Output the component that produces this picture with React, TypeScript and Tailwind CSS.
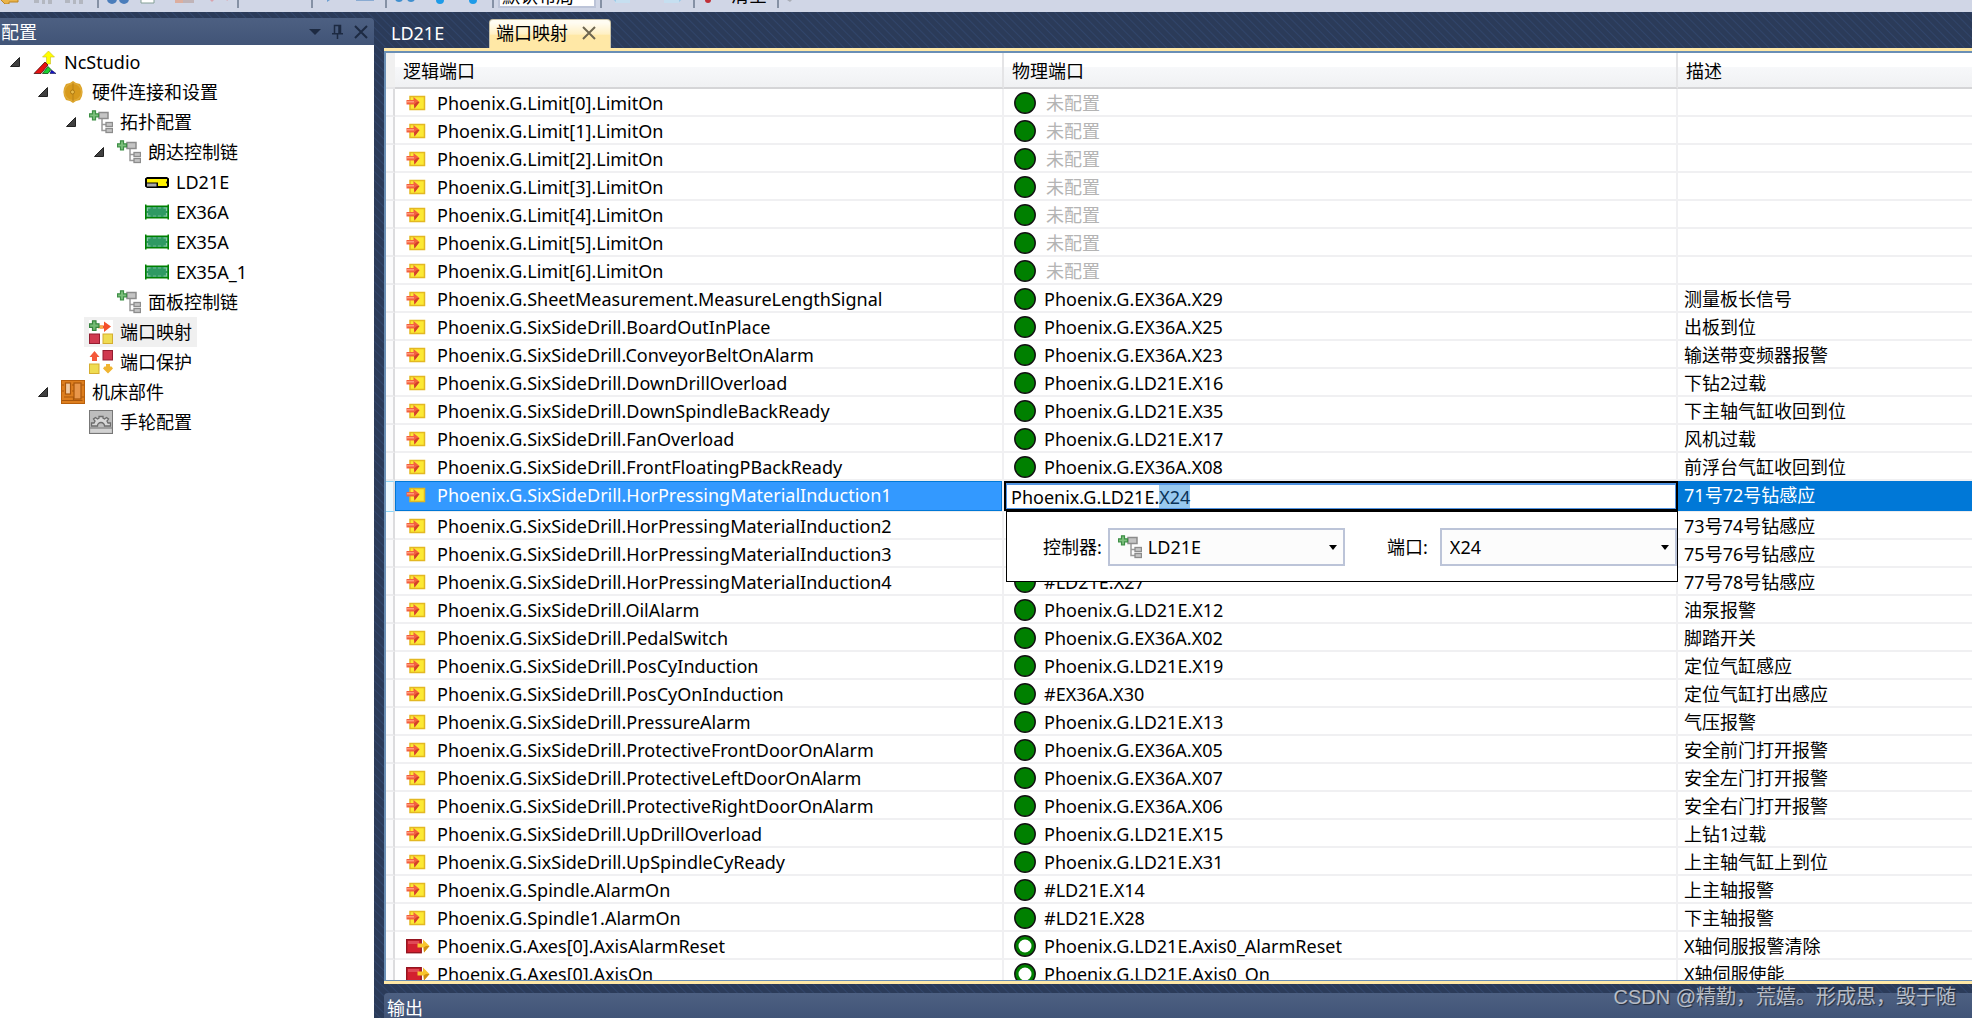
import { useEffect, useRef, useState } from "react";
import type { ReactNode } from "react";
import clsx from "clsx";

type PortRow = {
  name: string;
  port?: string;
  desc?: string;
  output?: boolean;
};

const rows: PortRow[] = [
  { name: "Phoenix.G.Limit[0].LimitOn" },
  { name: "Phoenix.G.Limit[1].LimitOn" },
  { name: "Phoenix.G.Limit[2].LimitOn" },
  { name: "Phoenix.G.Limit[3].LimitOn" },
  { name: "Phoenix.G.Limit[4].LimitOn" },
  { name: "Phoenix.G.Limit[5].LimitOn" },
  { name: "Phoenix.G.Limit[6].LimitOn" },
  { name: "Phoenix.G.SheetMeasurement.MeasureLengthSignal", port: "Phoenix.G.EX36A.X29", desc: "测量板长信号" },
  { name: "Phoenix.G.SixSideDrill.BoardOutInPlace", port: "Phoenix.G.EX36A.X25", desc: "出板到位" },
  { name: "Phoenix.G.SixSideDrill.ConveyorBeltOnAlarm", port: "Phoenix.G.EX36A.X23", desc: "输送带变频器报警" },
  { name: "Phoenix.G.SixSideDrill.DownDrillOverload", port: "Phoenix.G.LD21E.X16", desc: "下钻2过载" },
  { name: "Phoenix.G.SixSideDrill.DownSpindleBackReady", port: "Phoenix.G.LD21E.X35", desc: "下主轴气缸收回到位" },
  { name: "Phoenix.G.SixSideDrill.FanOverload", port: "Phoenix.G.LD21E.X17", desc: "风机过载" },
  { name: "Phoenix.G.SixSideDrill.FrontFloatingPBackReady", port: "Phoenix.G.EX36A.X08", desc: "前浮台气缸收回到位" },
  { name: "Phoenix.G.SixSideDrill.HorPressingMaterialInduction1", port: "Phoenix.G.LD21E.X24", desc: "71号72号钻感应" },
  { name: "Phoenix.G.SixSideDrill.HorPressingMaterialInduction2", port: "", desc: "73号74号钻感应" },
  { name: "Phoenix.G.SixSideDrill.HorPressingMaterialInduction3", port: "", desc: "75号76号钻感应" },
  { name: "Phoenix.G.SixSideDrill.HorPressingMaterialInduction4", port: "#LD21E.X27", desc: "77号78号钻感应" },
  { name: "Phoenix.G.SixSideDrill.OilAlarm", port: "Phoenix.G.LD21E.X12", desc: "油泵报警" },
  { name: "Phoenix.G.SixSideDrill.PedalSwitch", port: "Phoenix.G.EX36A.X02", desc: "脚踏开关" },
  { name: "Phoenix.G.SixSideDrill.PosCyInduction", port: "Phoenix.G.LD21E.X19", desc: "定位气缸感应" },
  { name: "Phoenix.G.SixSideDrill.PosCyOnInduction", port: "#EX36A.X30", desc: "定位气缸打出感应" },
  { name: "Phoenix.G.SixSideDrill.PressureAlarm", port: "Phoenix.G.LD21E.X13", desc: "气压报警" },
  { name: "Phoenix.G.SixSideDrill.ProtectiveFrontDoorOnAlarm", port: "Phoenix.G.EX36A.X05", desc: "安全前门打开报警" },
  { name: "Phoenix.G.SixSideDrill.ProtectiveLeftDoorOnAlarm", port: "Phoenix.G.EX36A.X07", desc: "安全左门打开报警" },
  { name: "Phoenix.G.SixSideDrill.ProtectiveRightDoorOnAlarm", port: "Phoenix.G.EX36A.X06", desc: "安全右门打开报警" },
  { name: "Phoenix.G.SixSideDrill.UpDrillOverload", port: "Phoenix.G.LD21E.X15", desc: "上钻1过载" },
  { name: "Phoenix.G.SixSideDrill.UpSpindleCyReady", port: "Phoenix.G.LD21E.X31", desc: "上主轴气缸上到位" },
  { name: "Phoenix.G.Spindle.AlarmOn", port: "#LD21E.X14", desc: "上主轴报警" },
  { name: "Phoenix.G.Spindle1.AlarmOn", port: "#LD21E.X28", desc: "下主轴报警" },
  { name: "Phoenix.G.Axes[0].AxisAlarmReset", port: "Phoenix.G.LD21E.Axis0_AlarmReset", desc: "X轴伺服报警清除", output: true },
  { name: "Phoenix.G.Axes[0].AxisOn", port: "Phoenix.G.LD21E.Axis0_On", desc: "X轴伺服使能", output: true },
];

/* ---------- icons ---------- */

function Icon({ children }: { children: ReactNode }) {
  return (
    <svg viewBox="0 0 24 24" className="size-6 shrink-0" aria-hidden="true">
      {children}
    </svg>
  );
}

function NcIcon() {
  return (
    <Icon>
      <path d="M15.500 1 21.500 7H17.500v7h-4V7H9.500z" fill="#ffff00" stroke="#c8ba20" strokeWidth=".6" />
      <path d="M1 23.500 12 12l3 3-7 8.500z" fill="#e81010" stroke="#300" strokeWidth=".7" />
      <path d="m9.500 23.500 5.500-7 3 3-3 4z" fill="#18d030" stroke="#030" strokeWidth=".7" />
      <path d="m17 23.500 1.500-3.500 4.500 3.500z" fill="#1414c8" stroke="#003" strokeWidth=".5" />
    </Icon>
  );
}

function HardwareIcon() {
  return (
    <Icon>
      <path d="m12 1 3 2 4 1 2 4 .6 4-.6 4-2 4-4 1-3 2-3-2-4-1-2-4-.6-4L3 8l2-4 4-1z" fill="#dca326" />
      <circle cx="12" cy="12" r="8.500" fill="#d79a1c" stroke="#e3b248" strokeWidth=".8" />
      <path d="M12 3v7M12 14v7" stroke="#b98218" />
      <circle cx="11.500" cy="12" r="2" fill="#e8bb4a" stroke="#a87410" strokeWidth=".9" />
    </Icon>
  );
}

function TopologyIcon() {
  return (
    <Icon>
      <path d="M13 8.500V20.500h4M13 14.500h4" fill="none" stroke="#9a9a9a" strokeWidth="1.500" />
      <rect x="10" y="2.500" width="9" height="6" fill="#c4c4c4" stroke="#8c8c8c" strokeWidth="1.500" />
      <rect x="17" y="12.500" width="6.500" height="4" fill="#c4c4c4" stroke="#8c8c8c" strokeWidth="1.300" />
      <rect x="17" y="18.500" width="6.500" height="4" fill="#c4c4c4" stroke="#8c8c8c" strokeWidth="1.300" />
      <path d="M3.500.800h3v3h3v3h-3v3h-3v-3h-3v-3h3z" fill="#7cc07c" stroke="#3d8f45" strokeWidth="1.200" />
    </Icon>
  );
}

function ControllerIcon() {
  return (
    <Icon>
      <path d="M2 7h20l2 1.500v8L22 18H2L0 16.500v-8z" fill="#000" />
      <path d="M2 9h20v2l-1 1.500 1 1.500v2H13v-3.500H2z" fill="#fff200" />
      <path d="M2 13.500h9.500v3H2z" fill="#a8a8a8" />
    </Icon>
  );
}

function BoardIcon() {
  return (
    <Icon>
      <path d="M0 4.500h1.500v1h21v-1H24v15h-1.500v-1h-21v1H0z" fill="#008000" />
      <rect x="1.500" y="7" width="21" height="10" fill="#2e9a62" />
      <path d="M2.500 11v-3h3M18.500 8h3v3M2.500 13v3h3M18.500 16h3v-3" fill="none" stroke="#8cc9a6" strokeWidth="1.200" />
      <path d="M8 8h3M13 8h3M8 16h3M13 16h3" stroke="#6fb890" />
    </Icon>
  );
}

function MappingIcon() {
  return (
    <Icon>
      <rect width="24" height="24" fill="#fff" />
      <path d="M11 5.500h4v-4l7 5-7 5.500V8.500h-4z" fill="#f4502c" />
      <path d="M9 5.500h5v3H9z" fill="#f3b04a" />
      <path d="M3.500.800h3.500v3h3v3.500H7v3H3.500v-3h-3V3.800h3z" fill="#73bb73" stroke="#36853e" strokeWidth="1.200" />
      <rect x=".5" y="14" width="10" height="9.500" fill="#d03a50" stroke="#941d30" />
      <rect x="14" y="14" width="9.500" height="9.500" fill="#efdc52" stroke="#d5ae30" />
    </Icon>
  );
}

function ProtectIcon() {
  return (
    <Icon>
      <path d="m5.500 1 5 6H8v4H3V7H.500z" fill="#f4583a" />
      <rect x="14" y=".5" width="9.500" height="9.500" fill="#d03a50" stroke="#941d30" />
      <rect x=".5" y="14" width="9.500" height="9.500" fill="#efdc52" stroke="#d5ae30" />
      <path d="m19 23.500-5-5 1.500-2h1.500V14h4v2.500h1.500l1.500 2z" fill="#f0b431" />
    </Icon>
  );
}

function MachineIcon() {
  return (
    <Icon>
      <rect x=".5" y=".5" width="23" height="23" fill="#dd7e1e" stroke="#b85f0b" />
      <path d="M3 5H1M3 11H1M3 17h9.500v3.500h9M11 5h2M11 11h2" fill="none" stroke="#a9560a" strokeWidth="1.200" />
      <rect x="4.500" y="3" width="5" height="11" fill="#f0c9a0" stroke="#a9560a" strokeWidth="1.200" />
      <rect x="13" y="3" width="7" height="16" fill="#e8964a" stroke="#a9560a" strokeWidth="1.200" />
      <path d="M20.500 5H23M20.500 17H23M1 20.500h11" stroke="#a9560a" />
    </Icon>
  );
}

function HandwheelIcon() {
  return (
    <Icon>
      <rect x=".5" y=".5" width="23" height="23" fill="#bdbdbd" stroke="#777" />
      <rect x="1.500" y="18.500" width="21" height="4" fill="#d2d2d2" />
      <path d="M1 18h22" stroke="#8a8a8a" strokeWidth="1.300" />
      <path
        d="M2.500 16v-3h2.500l1-2-1.500-2 2-1.500 2 1.500 1.500-.8V6.500h4v1.700l1.500.8 2-1.500 2 1.500-1.500 2 1 2h2.500v3h-6a3.500 3.500 0 0 0-7 0z"
        fill="#d8d8d8"
        stroke="#6c6c6c"
        strokeWidth="1.300"
      />
    </Icon>
  );
}

function InputPortIcon() {
  return (
    <svg viewBox="0 0 20 16" className="h-4 w-5 shrink-0" aria-hidden="true">
      <rect x="4" y="1.500" width="14.500" height="13" fill="#fce934" stroke="#e3b822" strokeWidth="1.500" />
      <path d="M.5 5h7V2L13.500 7l-5 6.500L8 9.500H.500z" fill="#f3603e" />
      <path d="M1 6h7v1.500H1z" fill="#ff9878" />
      <path d="m13.500 7-5 6.500L8 9.500 11 7z" fill="#d2402a" />
    </svg>
  );
}

function OutputPortIcon() {
  return (
    <svg viewBox="0 0 24 16" className="h-4 w-6 shrink-0" aria-hidden="true">
      <rect x=".7" y="1.700" width="14.500" height="13" fill="#d3202f" stroke="#941420" strokeWidth="1.400" />
      <path d="M2 3h11v3H2z" fill="#e04a56" />
      <path d="M11.500 5.500H17V1.500L23.500 8 18 14.500 17.500 9.500h-6z" fill="#f8c62e" />
      <path d="M23.500 8 18 14.500 17.500 9.500 20 8z" fill="#d08f12" />
    </svg>
  );
}

function CloseIcon({ className }: { className?: string }) {
  return (
    <svg viewBox="0 0 14 14" className={clsx("size-3.5", className)} fill="none" stroke="currentColor" strokeWidth="2" aria-hidden="true">
      <path d="m1 1 12 12M13 1 1 13" />
    </svg>
  );
}

/* ---------- toolbar ---------- */

function Tool({ label, children }: { label: string; children: ReactNode }) {
  return (
    <button type="button" aria-label={label} className="mb-1 shrink-0">
      <svg viewBox="0 0 22 22" className="size-[22px]" aria-hidden="true">
        {children}
      </svg>
    </button>
  );
}

function ToolGroup({ className, children }: { className: string; children: ReactNode }) {
  return (
    <div className={clsx("flex h-8 shrink-0 items-end justify-between border-r-2 border-[#8591a5]", className)}>
      {children}
    </div>
  );
}

function SaveArt() {
  return <path d="M2 6h12l6 4v12h-4v-4h-3v4h-3v-4H7v3H2z" fill="#b3b7c0" />;
}

function Toolbar() {
  return (
    <div className="flex h-3 shrink-0 items-end overflow-hidden bg-[#d0d6e6] pb-1">
      <ToolGroup className="w-[99px] pr-3">
        <Tool label="后退">
          <path d="m0 17 9-8v5h9v6H9v2H5z" fill="#e9b44a" stroke="#bd8420" />
        </Tool>
        <Tool label="保存">
          <SaveArt />
        </Tool>
        <Tool label="全部保存">
          <SaveArt />
        </Tool>
      </ToolGroup>
      <ToolGroup className="w-[140px] px-2">
        <Tool label="查找">
          <circle cx="5" cy="17" r="5" fill="#4a7dbb" />
          <circle cx="17" cy="17" r="5" fill="#4a7dbb" />
        </Tool>
        <Tool label="复制">
          <path d="M1 4h13v17H1z" fill="#fff" stroke="#84a096" />
          <path d="M14 10h7v8h-7z" fill="#c3dcd0" />
        </Tool>
        <Tool label="粘贴">
          <path d="M1 4h11v17H1z" fill="#dcae9f" />
          <path d="M9 10h11v11H9z" fill="#c0b4b8" />
        </Tool>
        <Tool label="删除">
          <path d="m3 18 3-4 2 3-3 3zM17 17l2-2 2 4z" fill="#d9a3ad" />
        </Tool>
      </ToolGroup>
      <ToolGroup className="w-[74px] px-3">
        <Tool label="撤销">
          <path d="M4 17h6" stroke="#c0c6d6" strokeWidth="2" />
        </Tool>
        <Tool label="重做">
          <path d="M10 17h6" stroke="#c0c6d6" strokeWidth="2" />
        </Tool>
      </ToolGroup>
      <ToolGroup className="w-[74px] px-2">
        <Tool label="标记">
          <path d="M6 10h3v8l-3 2z" fill="#6fa0d2" />
        </Tool>
        <Tool label="折叠">
          <path d="M1 16h18v3H1z" fill="#8aabd2" />
        </Tool>
      </ToolGroup>
      <ToolGroup className="w-[107px] px-2">
        <Tool label="断点">
          <circle cx="4" cy="16" r="4" fill="#3f8fce" />
          <circle cx="16" cy="16" r="4" fill="#3f8fce" />
        </Tool>
        <Tool label="上一个">
          <circle cx="11" cy="18" r="4" fill="#1e9be8" />
        </Tool>
        <Tool label="下一个">
          <circle cx="11" cy="18" r="4" fill="#1e9be8" />
        </Tool>
      </ToolGroup>
      <ToolGroup className="w-[108px] px-1">
        <select aria-label="布局" className="h-6 w-full appearance-none border-2 border-[#bcc4d8] bg-white px-0.5 text-[18px] leading-none text-black">
          <option>默认布局</option>
        </select>
      </ToolGroup>
      <ToolGroup className="w-[93px] px-2">
        <Tool label="导入">
          <path d="M5 6h15v15H5z" fill="#c6dff0" />
          <path d="m0 15 6-5v10z" fill="#9ccbe8" />
        </Tool>
        <Tool label="导出">
          <path d="M1 6h15v15H1z" fill="#c6dff0" />
          <path d="m22 15-6-5v10z" fill="#9ccbe8" />
        </Tool>
      </ToolGroup>
      <ToolGroup className="w-[84px] px-2">
        <button type="button" className="flex h-[26px] items-center gap-4 text-[18px] leading-none whitespace-nowrap text-black">
          <svg viewBox="0 0 12 24" className="h-6 w-3" aria-hidden="true">
            <circle cx="5" cy="17" r="3" fill="#c03038" />
          </svg>
          清空
        </button>
      </ToolGroup>
      <div className="flex h-8 items-end px-1">
        <Tool label="工具">
          <path d="m4 18 10-10 3 2L7 20z" fill="#a9adb6" />
        </Tool>
      </div>
    </div>
  );
}

/* ---------- configuration tree ---------- */

type TreeNode = {
  label: string;
  icon: ReactNode;
  indent: string;
  open?: boolean;
};

const tree: TreeNode[] = [
  { label: "NcStudio", icon: <NcIcon />, indent: "pl-2.5", open: true },
  { label: "硬件连接和设置", icon: <HardwareIcon />, indent: "pl-[38px]", open: true },
  { label: "拓扑配置", icon: <TopologyIcon />, indent: "pl-[66px]", open: true },
  { label: "朗达控制链", icon: <TopologyIcon />, indent: "pl-[94px]", open: true },
  { label: "LD21E", icon: <ControllerIcon />, indent: "pl-[122px]" },
  { label: "EX36A", icon: <BoardIcon />, indent: "pl-[122px]" },
  { label: "EX35A", icon: <BoardIcon />, indent: "pl-[122px]" },
  { label: "EX35A_1", icon: <BoardIcon />, indent: "pl-[122px]" },
  { label: "面板控制链", icon: <TopologyIcon />, indent: "pl-[94px]" },
  { label: "端口映射", icon: <MappingIcon />, indent: "pl-[66px]" },
  { label: "端口保护", icon: <ProtectIcon />, indent: "pl-[66px]" },
  { label: "机床部件", icon: <MachineIcon />, indent: "pl-[38px]", open: true },
  { label: "手轮配置", icon: <HandwheelIcon />, indent: "pl-[66px]" },
];

function Sidebar() {
  const [selected, setSelected] = useState("端口映射");

  return (
    <aside className="mr-2.5 flex w-[374px] shrink-0 flex-col pt-1.5">
      <div className="flex h-[27px] items-center justify-between rounded-tr bg-linear-to-b from-[#4d6082] to-[#415477] pr-1.5 pl-px text-white">
        <h2 className="text-[18px] leading-none">配置</h2>
        <div className="flex items-center gap-[11px] text-[#1d2a42]">
          <button type="button" aria-label="窗口位置">
            <svg viewBox="0 0 12 6" className="h-1.5 w-3" aria-hidden="true">
              <path d="M0 0h12L6 6z" fill="currentColor" />
            </svg>
          </button>
          <button type="button" aria-label="自动隐藏">
            <svg viewBox="0 0 11 15" className="h-[15px] w-[11px]" fill="none" stroke="currentColor" strokeWidth="1.500" aria-hidden="true">
              <path d="M2.500 9.500v-8h6v8M7 1.500v8M0 9.800h11M5.500 10v5" />
            </svg>
          </button>
          <button type="button" aria-label="关闭">
            <CloseIcon />
          </button>
        </div>
      </div>
      <ul className="min-h-0 flex-1 overflow-hidden bg-white pt-0.5">
        {tree.map((node) => (
          <li key={node.label} className={clsx("flex h-[30px] items-center", node.indent)}>
            <span className="mr-2 w-2.5 shrink-0">
              {node.open && (
                <svg viewBox="0 0 10 10" className="size-2.5" aria-hidden="true">
                  <path d="M9.500.500v9H.500z" fill="#404040" stroke="#222" />
                </svg>
              )}
            </span>
            <button
              type="button"
              onClick={() => setSelected(node.label)}
              className={clsx(
                "flex h-[30px] items-center gap-[7px] px-[5px] text-[18px] whitespace-nowrap",
                selected === node.label && "bg-[#f0f0f0]"
              )}
            >
              {node.icon}
              {node.label}
            </button>
          </li>
        ))}
      </ul>
    </aside>
  );
}

/* ---------- port table ---------- */

function DropArrow() {
  return (
    <svg viewBox="0 0 10 6" className="pointer-events-none absolute top-[17px] right-2 h-[5px] w-2" aria-hidden="true">
      <path d="M0 0h10L5 6z" />
    </svg>
  );
}

function PortEditor({ value }: { value: string }) {
  const ref = useRef<HTMLInputElement>(null);
  const [text, setText] = useState(value);

  useEffect(() => {
    ref.current?.focus();
    ref.current?.setSelectionRange(value.lastIndexOf(".") + 1, value.length);
  }, [value]);

  return (
    <>
      <div className="border-2 border-black">
        <input
          ref={ref}
          aria-label="物理端口"
          value={text}
          onChange={(e) => setText(e.target.value)}
          className="block h-[26px] w-full border border-t-2 border-[#5294e2] bg-white px-1 text-[18px] text-black outline-none selection:bg-[#99c9ef] selection:text-[#0a3358]"
        />
      </div>
      {/* controller / port picker under the edited cell */}
      <div className="absolute top-full right-0 left-0.5 z-10 grid h-[71px] grid-cols-[auto_1fr_auto_1fr] items-center border border-black bg-white pl-9 text-[18px] text-black">
        <label htmlFor="controller" className="pr-1.5">
          控制器:
        </label>
        <div className="relative">
          <span className="pointer-events-none absolute top-[7px] left-2.5">
            <TopologyIcon />
          </span>
          <select id="controller" className="block h-[38px] w-full appearance-none border-2 border-[#bcc4d8] bg-[#fcfcfc] pl-[38px]">
            <option>LD21E</option>
            <option>EX36A</option>
            <option>EX35A</option>
            <option>EX35A_1</option>
          </select>
          <DropArrow />
        </div>
        <label htmlFor="port" className="pr-3 pl-[42px]">
          端口:
        </label>
        <div className="relative">
          <select id="port" className="block h-[38px] w-full appearance-none border-2 border-[#bcc4d8] bg-[#fcfcfc] pl-2">
            <option>X24</option>
            <option>X25</option>
            <option>X26</option>
            <option>X27</option>
          </select>
          <DropArrow />
        </div>
      </div>
    </>
  );
}

function StatusDot({ hollow }: { hollow?: boolean }) {
  return (
    <svg viewBox="0 0 22 22" className="size-[22px] shrink-0" aria-hidden="true">
      <circle cx="11" cy="11" r="10.200" fill="#008000" stroke="#111" strokeWidth="1.500" />
      {hollow && <circle cx="11" cy="11" r="6.500" fill="#fff" />}
    </svg>
  );
}

const headCell =
  "border-r-2 border-b-2 border-r-[#e4e4e6] border-b-[#d5d5d7] bg-linear-to-b from-white from-40% via-[#f7f8fa] via-41% to-[#f0f1f3] px-2 pt-0.5 text-left font-normal last:border-r-0";

function PortTable() {
  const active = 14;

  return (
    <table className="w-full table-fixed border-separate border-spacing-0 text-[18px]">
      <colgroup>
        <col className="w-[9px]" />
        <col className="w-[38.4%]" />
        <col className="w-[42.5%]" />
        <col />
      </colgroup>
      <thead>
        <tr className="h-9 leading-none">
          <td className="border-b-2 border-b-[#e6e6e8] bg-[#f0f0f0]" />
          <th className={headCell}>逻辑端口</th>
          <th className={headCell}>物理端口</th>
          <th className={headCell}>描述</th>
        </tr>
      </thead>
      <tbody>
        {rows.map((row, index) => {
          const selected = index === active;
          return (
            <tr key={row.name} className={clsx("leading-none whitespace-nowrap", selected ? "h-[31px] text-white" : "h-7")}>
              <td
                className={clsx(
                  "border-r-2 border-r-[#dcdcde] p-0",
                  selected ? "border-y border-y-[#8fd6f7] bg-[#eef9fe]" : "border-b-2 border-b-[#ececee] bg-[#fbfbfc]"
                )}
              />
              <td className={clsx("border-r-2 border-r-[#f0f0f2] p-0", selected ? "border-b border-b-[#ececee]" : "border-b-2 border-b-[#f0f0f2]")}>
                <div
                  className={clsx(
                    "flex items-center",
                    selected ? "h-[30px] border border-[#0078d7] bg-[#3399ff] pb-0.5 pl-2.5" : "h-[26px] pt-0.5 pl-[11px]"
                  )}
                >
                  <span className="flex w-[31px] shrink-0">{row.output ? <OutputPortIcon /> : <InputPortIcon />}</span>
                  {row.name}
                </div>
              </td>
              <td
                className={clsx(
                  "p-0",
                  selected ? "relative border-b border-b-[#ececee]" : "border-r-2 border-b-2 border-r-[#f0f0f2] border-b-[#f0f0f2]"
                )}
              >
                {selected ? (
                  <PortEditor value={row.port ?? ""} />
                ) : (
                  <div className="flex h-[26px] items-center gap-2 pt-0.5 pl-2.5">
                    <StatusDot hollow={row.output} />
                    {row.port ?? <span className="pl-0.5 text-[#b4b4b4]">未配置</span>}
                  </div>
                )}
              </td>
              <td className={clsx("p-0", selected ? "border-b border-b-[#ececee] bg-[#0078d7]" : "border-b-2 border-b-[#f0f0f2]")}>
                <div className={clsx("pl-1.5", selected ? "pb-0.5" : "pt-0.5")}>{row.desc}</div>
              </td>
            </tr>
          );
        })}
      </tbody>
    </table>
  );
}

export default function App() {
  return (
    <div className="flex h-screen flex-col overflow-hidden bg-[#2b3b59] bg-[repeating-linear-gradient(45deg,#2b3b59_0px,#2b3b59_4px,#31456a_5px,#2b3b59_6px)] font-['Noto_Sans','Noto_Sans_CJK_SC',sans-serif] text-black">
      <Toolbar />
      <div className="flex min-h-0 flex-1">
        <Sidebar />
        <main className="flex min-w-0 flex-1 flex-col">
          <div className="flex h-9 shrink-0 items-end text-[18px] leading-none">
            <button type="button" className="h-[29px] w-[105px] pb-0.5 pl-[7px] text-left text-white">
              LD21E
            </button>
            <div className="flex h-[29px] items-center gap-3.5 rounded-t-sm border border-b-0 border-[#c9c2a8] bg-linear-to-b from-[#fffcf2] from-10% via-[#fff0c4] via-50% to-[#ffe8a6] to-55% pr-3.5 pb-0.5 pl-1.5">
              <button type="button">端口映射</button>
              <button type="button" aria-label="关闭端口映射" className="text-[#6e6650]">
                <CloseIcon />
              </button>
            </div>
          </div>
          <section className="min-h-0 flex-1 overflow-hidden border-y-[3px] border-[#ffe8a6]">
            <div className="h-full overflow-hidden border-t-2 border-b border-l-2 border-[#6a8fb5] bg-white">
              <PortTable />
            </div>
          </section>
          <div className="mt-[9px] flex h-[25px] shrink-0 items-center rounded-tl bg-linear-to-b from-[#4d6082] to-[#415477] pt-1 pl-[3px] text-[18px] text-white">
            <h2 className="leading-none">输出</h2>
          </div>
        </main>
      </div>
      <p className="pointer-events-none absolute right-4 bottom-1.5 z-20 font-['Liberation_Sans','Noto_Sans_CJK_SC',sans-serif] text-[20px] leading-[30px] text-white/65 [text-shadow:1px_1px_1px_#0008]">
        CSDN @精勤，荒嬉。形成思，毁于随
      </p>
    </div>
  );
}
